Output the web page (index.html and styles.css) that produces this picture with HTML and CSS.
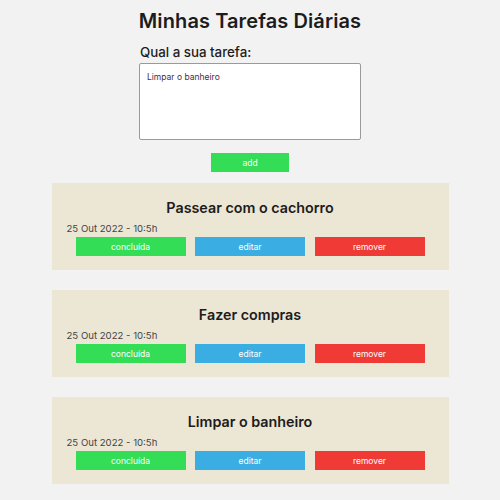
FILE: index.html
```html
<!DOCTYPE html>
<html lang="pt-BR">
<head>
<meta charset="utf-8">
<title>Minhas Tarefas Diárias</title>
<link rel="stylesheet" href="styles.css">
</head>
<body>
<main class="page">
  <h1 class="page-title">Minhas Tarefas Diárias</h1>
  <form class="task-form">
    <label class="task-label" for="task">Qual a sua tarefa:</label>
    <textarea class="task-input" id="task">Limpar o banheiro</textarea>
    <button type="button" class="btn btn-add">add</button>
  </form>
  <section class="task-list">
    <article class="task-card">
      <h2 class="task-title">Passear com o cachorro</h2>
      <p class="task-date">25 Out 2022 - 10:5h</p>
      <div class="task-actions">
        <button type="button" class="btn btn-done">concluída</button>
        <button type="button" class="btn btn-edit">editar</button>
        <button type="button" class="btn btn-remove">remover</button>
      </div>
    </article>
    <article class="task-card">
      <h2 class="task-title">Fazer compras</h2>
      <p class="task-date">25 Out 2022 - 10:5h</p>
      <div class="task-actions">
        <button type="button" class="btn btn-done">concluída</button>
        <button type="button" class="btn btn-edit">editar</button>
        <button type="button" class="btn btn-remove">remover</button>
      </div>
    </article>
    <article class="task-card">
      <h2 class="task-title">Limpar o banheiro</h2>
      <p class="task-date">25 Out 2022 - 10:5h</p>
      <div class="task-actions">
        <button type="button" class="btn btn-done">concluída</button>
        <button type="button" class="btn btn-edit">editar</button>
        <button type="button" class="btn btn-remove">remover</button>
      </div>
    </article>
  </section>
</main>
</body>
</html>
```

FILE: styles.css
```css
* { box-sizing: border-box; }
html, body { margin: 0; padding: 0; }
body {
  background: #f2f2f2;
  font-family: "Inter", "Noto Sans", sans-serif;
  color: #1c1c1c;
  height: 500px;
  overflow: hidden;
}
.page {
  display: flex;
  flex-direction: column;
  align-items: center;
  padding-top: 8px;
}
.page-title {
  margin: 0;
  font-size: 20px;
  font-weight: 600;
  line-height: 26px;
  letter-spacing: 0.1px;
}
.task-form {
  width: 222px;
  display: flex;
  flex-direction: column;
  align-items: center;
  margin-top: 10px;
}
.task-label {
  align-self: flex-start;
  font-size: 13.3px;
  font-weight: 500;
  line-height: 16px;
  margin-left: 1px;
}
.task-input {
  width: 222px;
  height: 77px;
  margin-top: 3px;
  border: 1px solid #9a9a9a;
  border-radius: 2px;
  background: #fff;
  padding: 8px 7px;
  font-family: inherit;
  font-size: 8.5px;
  color: #4a2a4a;
  resize: none;
}
.btn {
  border: none;
  font-family: inherit;
  font-size: 8.5px;
  color: #fff;
  height: 19px;
  padding: 0;
  cursor: pointer;
}
.btn-add {
  margin-top: 13px;
  width: 78px;
  background: #33dd55;
}
.task-list {
  width: 397px;
  margin-top: 11px;
  display: flex;
  flex-direction: column;
  gap: 20px;
}
.task-card {
  background: #ece6d4;
  padding: 15px 15px 14px;
  display: flex;
  flex-direction: column;
}
.task-title {
  margin: 0;
  text-align: center;
  font-size: 14.3px;
  font-weight: 600;
  line-height: 20px;
}
.task-date {
  margin: 4px 0 0;
  font-size: 9.6px;
  line-height: 14px;
  color: #444;
}
.task-actions {
  margin-top: 1px;
  display: flex;
  justify-content: center;
  gap: 9.5px;
}
.task-actions .btn { width: 110px; }
.btn-done { background: #33dd55; }
.btn-edit { background: #3aaee3; }
.btn-remove { background: #ef3a36; }
```
